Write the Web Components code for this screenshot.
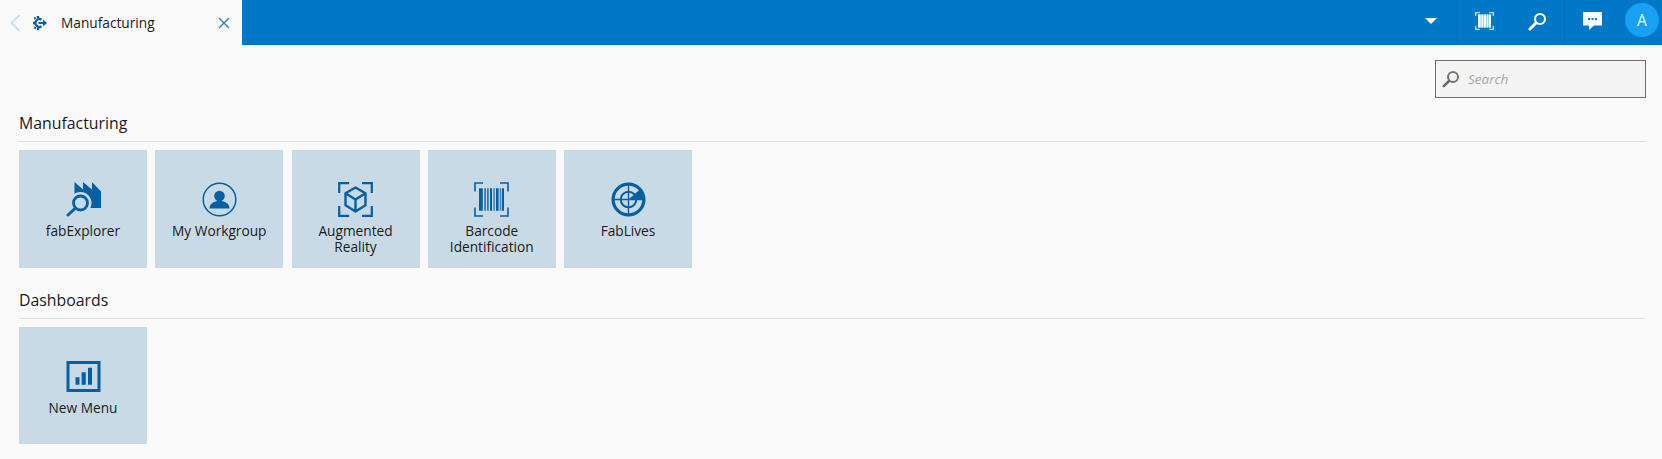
<!DOCTYPE html>
<html>
<head>
<meta charset="utf-8">
<title>Manufacturing</title>
<style>
html, body { margin: 0; height: 100%; background: #fafafa; overflow: hidden; }
body { font-family: "Open Sans", sans-serif; color: #1a1a1a; }
</style>
</head>
<body>
<app-header></app-header>
<app-page>
  <search-box></search-box>
  <menu-section title="Manufacturing">
    <menu-tile label="fabExplorer" icon="explorer"></menu-tile>
    <menu-tile label="My Workgroup" icon="workgroup"></menu-tile>
    <menu-tile label="Augmented Reality" icon="ar"></menu-tile>
    <menu-tile label="Barcode Identification" icon="barcode"></menu-tile>
    <menu-tile label="FabLives" icon="radar"></menu-tile>
  </menu-section>
  <menu-section title="Dashboards">
    <menu-tile label="New Menu" icon="chart"></menu-tile>
  </menu-section>
</app-page>

<script>
const icons = {
  explorer: `<path d="M8.500 0L17 7.500V0l9 7.500V0l9 9.500V26H8.500z"/>
    <circle cx="14.500" cy="21" r="11" fill="#c8dae6"/>
    <rect x="0" y="26" width="8" height="9" fill="#c8dae6"/>
    <circle cx="14.500" cy="21" r="7" fill="none" stroke="currentColor" stroke-width="2.800"/>
    <path d="M9.500 26L2 33" fill="none" stroke="currentColor" stroke-width="3" stroke-linecap="round"/>`,
  workgroup: `<circle cx="17.500" cy="17.500" r="16.300" fill="none" stroke="currentColor" stroke-width="1.500"/>
    <circle cx="17.500" cy="14" r="5.300"/>
    <path d="M7.500 26.500c0-5 4.500-7.500 10-7.500s10 2.500 10 7.500z"/>`,
  ar: `<path d="M1.200 11V1.200h10M24 1.200h9.800V11M1.200 24v9.800h10M24 33.800h9.800V24" fill="none" stroke="currentColor" stroke-width="2.200"/>
    <path d="M17.500 5.500l10 5.800v11.900l-10 6.300-10-6.300V11.300zM7.500 11.300l10 6.300 10-6.300M17.500 17.600v11.900" fill="none" stroke="currentColor" stroke-width="2.400" stroke-linejoin="round"/>`,
  barcode: `<path d="M1 9.500V1h8M26 1h8v8.500M1 25.500V34h8M26 34h8v-8.500" fill="none" stroke="currentColor" stroke-width="1.600"/>
    <path d="M5 6.300h3.800v22.400H5zM10.400 6.300h1.400v22.400h-1.400zM13.200 6.300h1.400v22.400h-1.400zM16 6.300h2v22.400h-2zM19.500 6.300h1.100v22.400h-1.100zM22 6.300h2.600v22.400H22zM25.800 6.300h.9v22.400h-.9zM27.800 6.300h2.200v22.400h-2.200z"/>`,
  radar: `<circle cx="17.500" cy="17.500" r="15.400" fill="none" stroke="currentColor" stroke-width="3.200"/>
    <circle cx="17.500" cy="17.500" r="7.800" fill="none" stroke="currentColor" stroke-width="2"/>
    <path d="M17.500 1v33M1 17.500h33" stroke="currentColor" stroke-width="1.400"/>
    <path d="M17.500 17.500L29.500 7a16 16 0 0 1 4 10.500z"/>`,
  chart: `<rect x="2" y="3.500" width="31" height="28" fill="none" stroke="currentColor" stroke-width="3"/>
    <path d="M9.500 18.300h4v7.400h-4zM15.600 13.300h4.200v12.400h-4.200zM22 8.700h4v17h-4z"/>`
}

// tile in the launcher grid, icon is picked by name from the table above
class MenuTile extends HTMLElement {
  connectedCallback() {
    const root = this.attachShadow({mode: 'open'})
    root.innerHTML = `
    <style>
    :host {
      display: flex;
      flex-direction: column;
      align-items: center;
      box-sizing: border-box;
      width: 128px;
      height: 117.500px;
      padding: 32px 12px 0;
      background: #c8dae6;
      color: #1a1a1a;
    }
    svg { width: 35px; height: 35px; fill: #0560a3; color: #0560a3; flex: none; }
    span { margin-top: 6px; font-size: 13.700px; line-height: 16px; text-align: center; }
    </style>
    <svg viewBox="0 0 35 35">${icons[this.getAttribute('icon')]}</svg>
    <span>${this.getAttribute('label')}</span>`
  }
}

class MenuSection extends HTMLElement {
  connectedCallback() {
    const root = this.attachShadow({mode: 'open'})
    root.innerHTML = `
    <style>
    :host { display: block; margin-bottom: 7px; }
    h2 {
      margin: 0 0 8px;
      padding-bottom: 7px;
      font-size: 15.850px;
      line-height: 22px;
      font-weight: 400;
      color: #1a1a1a;
      border-bottom: 1px solid #e0e0e0;
    }
    .tiles { display: flex; gap: 8.250px; }
    </style>
    <h2>${this.getAttribute('title')}</h2>
    <div class="tiles"><slot></slot></div>`
  }
}

class SearchBox extends HTMLElement {
  connectedCallback() {
    const root = this.attachShadow({mode: 'open'})
    root.innerHTML = `
    <style>
    :host {
      display: flex;
      align-items: center;
      gap: 8px;
      box-sizing: border-box;
      width: 211px;
      height: 38px;
      margin-left: auto;
      padding: 0 8px 0 6px;
      background: #f4f4f4;
      border: 1.500px solid #6e6e6e;
    }
    svg { width: 18px; height: 18px; flex: none; }
    span { font-size: 13.500px; font-style: italic; color: #a3aaa6; }
    </style>
    <svg viewBox="0 0 18 18">
      <circle cx="11" cy="7" r="5" fill="none" stroke="#7d7468" stroke-width="2"/>
      <path d="M7 11L1.800 16.200" stroke="#6b6b6b" stroke-width="2.600" stroke-linecap="round"/>
    </svg>
    <span>Search</span>`
  }
}

class AppHeader extends HTMLElement {
  connectedCallback() {
    const root = this.attachShadow({mode: 'open'})
    root.innerHTML = `
    <style>
    :host {
      display: flex;
      align-items: stretch;
      height: 45px;
      background: #0078c8;
      color: #fff;
    }
    .tab {
      display: flex;
      align-items: center;
      box-sizing: border-box;
      width: 242px;
      padding: 0 9px 0 10px;
      background: #fafafa;
      color: #1a1a1a;
      font-size: 13.700px;
    }
    .back { width: 11px; height: 18px; flex: none; }
    .gear { width: 14px; height: 14px; margin-left: 12px; flex: none; }
    .name { margin-left: 14px; flex: 1; }
    .close { width: 12px; height: 12px; flex: none; margin-right: 3px; }
    .tools { display: flex; align-items: stretch; margin-left: auto; padding-right: 3px; }
    .tool { display: flex; align-items: center; justify-content: center; box-sizing: border-box; padding-bottom: 3px; }
    .sep { border-right: 1px solid #0070ba; }
    .caret { width: 0; height: 0; border: 6px solid transparent; border-top: 6.500px solid #fff; border-bottom: 0; }
    .avatar {
      width: 34px;
      height: 34px;
      border-radius: 50%;
      background: #18a0f5;
      font-size: 15.500px;
      text-align: center;
      line-height: 34px;
      margin: 3px 0 0 6px;
    }
    </style>
    <div class="tab">
      <svg class="back" viewBox="0 0 11 18"><path d="M9.500 1L1.500 9l8 8" fill="none" stroke="#b5d6ea" stroke-width="1.400"/></svg>
      <svg class="gear" viewBox="0 0 14 14" fill="#0560a3">
        <path d="M8.500 3.700A3.900 3.900 0 1 0 8.500 10.300" fill="none" stroke="#0560a3" stroke-width="2.200"/>
        <path d="M3.800 0h2.400v2.400H3.800zM3.800 11.600h2.400V14H3.800zM0 5.800h2v2.400H0zM.6 1.800l1.700-1 1 1.700-1.700 1zM.6 12.200l1.700 1 1-1.700-1.700-1z"/>
        <path d="M5.500 6h4.500V3.500L14 7l-4 3.500V8H5.500z"/>
      </svg>
      <span class="name">Manufacturing</span>
      <svg class="close" viewBox="0 0 12 12"><path d="M1 1l10 10M11 1L1 11" stroke="#2f78a8" stroke-width="1.200"/></svg>
    </div>
    <div class="tools">
      <div class="tool sep" style="width:51px"><div class="caret"></div></div>
      <div class="tool" style="width:54px">
        <svg width="19" height="18" viewBox="0 0 19 18">
          <path d="M.700 4V.700h4M14.300.700h4V4M.700 14v3.300h4M14.300 17.300h4V14" fill="none" stroke="#bfe3f5" stroke-width="1.300"/>
          <rect x="3" y="2.500" width="13" height="13" fill="#9fd4ee"/>
          <path d="M3 2.500h2.500v13H3zM6.500 2.500h1.500v13H6.500zM9 2.500h2v13H9zM12 2.500h1v13h-1zM14 2.500h2v13h-2z" fill="#f2fafe"/>
        </svg>
      </div>
      <div class="tool sep" style="width:54px">
        <svg width="19" height="19" viewBox="0 0 19 19">
          <circle cx="12" cy="7" r="5" fill="none" stroke="#fff" stroke-width="2.200"/>
          <path d="M8 11L2 17" stroke="#fff" stroke-width="3" stroke-linecap="round"/>
        </svg>
      </div>
      <div class="tool" style="width:54px">
        <svg width="19" height="18" viewBox="0 0 19 18">
          <path fill="#fff" d="M0 0h19v13.500h-8L6 18v-4.500H0z"/>
          <path fill="#0078c8" d="M5 6h2v2H5zM8.500 6h2v2h-2zM12 6h2v2h-2z"/>
        </svg>
      </div>
      <div class="avatar">A</div>
    </div>`
  }
}

class AppPage extends HTMLElement {
  connectedCallback() {
    const root = this.attachShadow({mode: 'open'})
    root.innerHTML = `
    <style>
    :host {
      display: flex;
      flex-direction: column;
      gap: 14px;
      padding: 15px 16px 0 19px;
    }
    </style>
    <slot></slot>`
  }
}

customElements.define('menu-tile', MenuTile)
customElements.define('menu-section', MenuSection)
customElements.define('search-box', SearchBox)
customElements.define('app-header', AppHeader)
customElements.define('app-page', AppPage)
</script>
</body>
</html>
